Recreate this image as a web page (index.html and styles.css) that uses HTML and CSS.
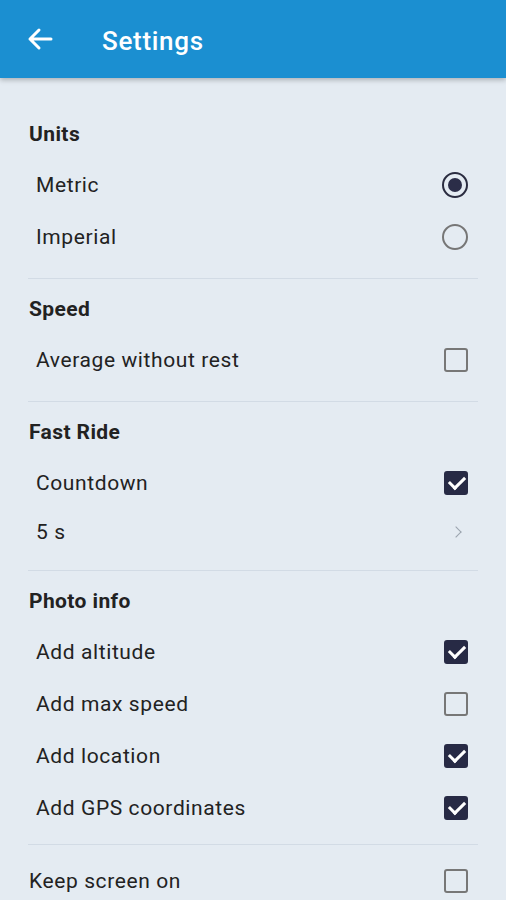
FILE: index.html
```html
<!DOCTYPE html>
<html lang="en">
<head>
    <meta charset="UTF-8">
    <meta name="viewport" content="width=device-width, initial-scale=1.0">
    <title>Settings</title>
    <link rel="stylesheet" href="styles.css">
</head>
<body>

    <!-- Top app bar -->
    <header class="app-bar">
        <svg class="back-icon" width="26" height="24" viewBox="0 0 26 24">
            <path d="M24 12H3 M12 3l-9 9 9 9" fill="none" stroke="#fff" stroke-width="3" stroke-linecap="round" stroke-linejoin="round"/>
        </svg>
        <span class="app-title">Settings</span>
    </header>

    <main class="settings">

        <section class="section first">
            <div class="section-title">Units</div>
            <div class="row"><span>Metric</span><span class="radio checked"></span></div>
            <div class="row"><span>Imperial</span><span class="radio"></span></div>
        </section>

        <section class="section">
            <div class="section-title">Speed</div>
            <div class="row"><span>Average without rest</span><span class="check"></span></div>
        </section>

        <section class="section">
            <div class="section-title">Fast Ride</div>
            <div class="row"><span>Countdown</span><span class="check checked"></span></div>
            <div class="row row-link"><span>5 s</span><span class="chevron"></span></div>
        </section>

        <section class="section photo">
            <div class="section-title">Photo info</div>
            <div class="row"><span>Add altitude</span><span class="check checked"></span></div>
            <div class="row"><span>Add max speed</span><span class="check"></span></div>
            <div class="row"><span>Add location</span><span class="check checked"></span></div>
            <div class="row"><span>Add GPS coordinates</span><span class="check checked"></span></div>
        </section>

        <section class="section last">
            <div class="row flush"><span>Keep screen on</span><span class="check"></span></div>
        </section>

    </main>

</body>
</html>
```

FILE: styles.css
```css
body {
    font-family: Roboto, "Noto Sans", sans-serif;
    background-color: #e4ebf2;
    color: #222;
    margin: 0;
    height: 900px;
    overflow: hidden;
}

/* App bar */
.app-bar {
    height: 78px;
    background-color: #1b8fd1;
    display: flex;
    align-items: center;
    padding: 0 0 0 27px;
    box-shadow: 0 2px 5px rgba(0, 0, 0, 0.25);
    box-sizing: border-box;
    position: relative;
}

.app-title {
    color: #fff;
    font-size: 26px;
    font-weight: 500;
    letter-spacing: 0.7px;
    margin: 3px 0 0 49px;
}

/* Settings list */
.settings {
    padding: 0 28px;
}

.section {
    padding: 5px 0 15px;
    border-bottom: 1px solid #d2dbe5;
}

.section.first {
    padding-top: 31px;
}

.section.photo {
    padding-bottom: 10px;
}

.section.last {
    border-bottom: none;
    padding-top: 10px;
}

.section-title {
    height: 50px;
    display: flex;
    align-items: center;
    font-size: 21px;
    font-weight: 700;
    letter-spacing: 0.4px;
    padding-left: 1px;
}

.row {
    height: 52px;
    display: flex;
    align-items: center;
    justify-content: space-between;
    font-size: 21px;
    letter-spacing: 0.6px;
    padding: 0 10px 0 8px;
}

.row-link {
    height: 46px;
}

.row.flush {
    padding-left: 1px;
}

/* Controls */
.radio {
    width: 26px;
    height: 26px;
    border: 2px solid #767676;
    border-radius: 50%;
    box-sizing: border-box;
    display: flex;
    align-items: center;
    justify-content: center;
}

.radio.checked {
    border-color: #2a2c40;
}

.radio.checked::after {
    content: "";
    width: 14px;
    height: 14px;
    border-radius: 50%;
    background-color: #2b2d48;
}

.check {
    width: 24px;
    height: 24px;
    border: 2px solid #777;
    border-radius: 3px;
    box-sizing: border-box;
    position: relative;
}

.check.checked {
    background-color: #272a45;
    border-color: #272a45;
}

.check.checked::after {
    content: "";
    position: absolute;
    left: 6px;
    top: 0;
    width: 7px;
    height: 13px;
    border: solid #fff;
    border-width: 0 3px 3px 0;
    transform: rotate(45deg);
}

.chevron {
    width: 7px;
    height: 7px;
    border: solid #9aa3ad;
    border-width: 1.5px 1.5px 0 0;
    transform: rotate(45deg);
    margin-right: 8px;
}
```
